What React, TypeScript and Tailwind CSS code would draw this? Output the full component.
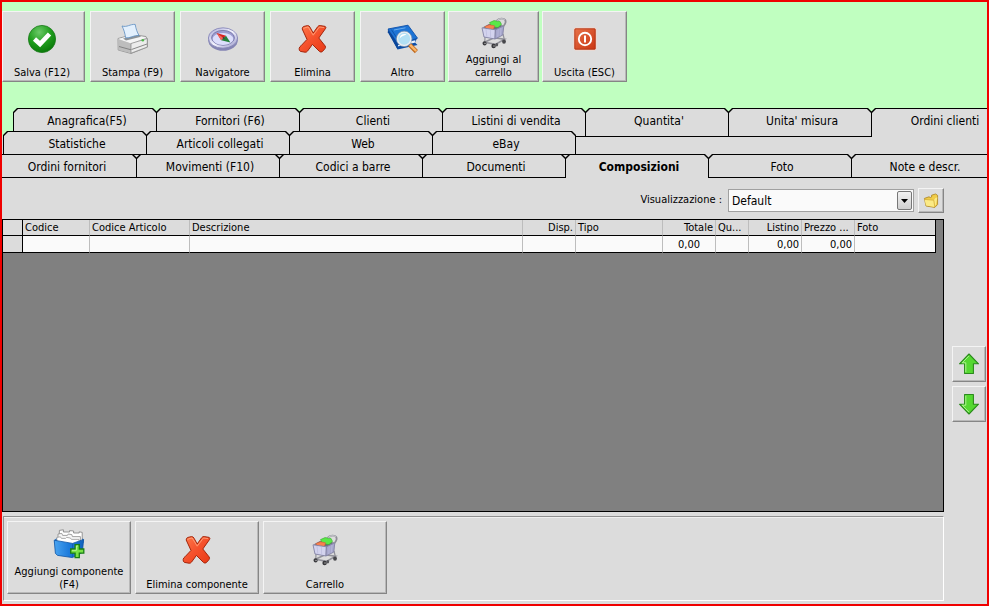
import { useState } from "react";
import type { ReactNode } from "react";
import clsx from "clsx";

type Action = { label: string; icon: ReactNode; className?: string };

const CheckIcon = () => (
  <svg width="32" height="32" viewBox="0 0 32 32" aria-hidden="true">
    <defs>
      <radialGradient id="check" cx="40%" cy="25%" r="80%">
        <stop offset="0" stopColor="#6cc968" />
        <stop offset="0.5" stopColor="#22a01f" />
        <stop offset="1" stopColor="#077507" />
      </radialGradient>
    </defs>
    <circle cx="16" cy="16" r="13.6" fill="url(#check)" stroke="#1b7a1b" strokeWidth="0.8" />
    <path d="M8.5 16 L14 21 L23.5 11" fill="none" stroke="#fff" strokeWidth="4.6" />
  </svg>
);

const PrinterIcon = () => (
  <svg width="32" height="32" viewBox="0 0 32 32" aria-hidden="true">
    <path d="M1 15.5 L16 11.5 L29 13.5 L30.5 16.5 V24 L14 30.5 L1.2 27 Z" fill="#d3d3d3" stroke="#8b8b8b" strokeWidth="0.8" />
    <path d="M1 16 L16 12 L29.5 14.5 L14 20.5 Z" fill="#f5f5f5" />
    <path d="M1 16 L14 20.5 V30 L1.5 27 Z" fill="#bdbdbd" />
    <path d="M14 20.5 L30.3 15.5 V24 L14 30.2 Z" fill="#ececec" stroke="#858585" strokeWidth="0.7" />
    <path d="M14.5 26.5 L30 21 M2 23.5 L14 26.8" stroke="#7c7c7c" strokeWidth="0.9" />
    <path d="M6 15.5 L22 12 L24 13.7 L9 17.6 Z" fill="#8d9499" />
    <path d="M5 3 C10 4.6 13 1 18.2 1.4 C19 6 20 9 22 12.4 C17 12 13 15.5 8.6 14.8 C8 10 6.6 6 5 3 Z" fill="#e3f0fd" stroke="#5a8bc0" strokeWidth="0.8" />
    <circle cx="25.8" cy="17.2" r="1.3" fill="#4db848" />
  </svg>
);

const CompassIcon = () => (
  <svg width="32" height="32" viewBox="0 0 32 32" aria-hidden="true">
    <defs>
      <linearGradient id="rim" x1="0" y1="0" x2="1" y2="1">
        <stop offset="0" stopColor="#a4a4d4" />
        <stop offset="0.5" stopColor="#f4f4ff" />
        <stop offset="1" stopColor="#9494c6" />
      </linearGradient>
    </defs>
    <ellipse cx="16" cy="17.2" rx="14.8" ry="10.6" fill="#8585b4" />
    <ellipse cx="16" cy="15" rx="14.6" ry="10.2" fill="url(#rim)" stroke="#8080b2" strokeWidth="0.8" />
    <ellipse cx="16" cy="14.8" rx="11.4" ry="7.4" fill="#9c9cd0" stroke="#6c6ca0" strokeWidth="0.8" />
    <ellipse cx="16" cy="16" rx="10.4" ry="6" fill="#dcdefc" />
    <path d="M9.6 10 L19 12.8 L14.2 17.2 Z" fill="#d8201c" />
    <path d="M19 12.8 L23.4 19.4 L14.2 17.2 Z" fill="#24823a" />
    <path d="M9.6 10 L16.6 15 L14.2 17.2 Z" fill="#f0685a" />
    <circle cx="16.6" cy="15" r="1" fill="#443c44" />
  </svg>
);

const DeleteIcon = () => (
  <svg width="32" height="32" viewBox="0 0 32 32" aria-hidden="true">
    <defs>
      <linearGradient id="cross" x1="0" y1="0" x2="1" y2="1">
        <stop offset="0" stopColor="#ff7a4c" />
        <stop offset="0.5" stopColor="#f5512c" />
        <stop offset="1" stopColor="#e83a16" />
      </linearGradient>
    </defs>
    <path
      d="M5.2 6 Q5 4 7 3.4 L10.5 2.6 Q12.3 2.6 13 4.2 L16.2 10 L20.6 3.8 Q21.6 2.4 23.2 2.6 L28.2 3.4 Q29.4 4 28.6 5.4 L21.8 15 L28.2 23 Q29 24.4 28 25.6 L25.4 28.6 Q24 29.6 22.6 28.6 L15.4 21.4 L10.6 28 Q9.6 29.4 8 29.2 L3.4 28.4 Q1.8 27.4 2.2 25.4 Q2.4 23.8 4 22.8 L10 16.4 Z"
      fill="url(#cross)"
      stroke="#a3260c"
      strokeWidth="1"
      strokeLinejoin="round"
    />
    <path d="M6.5 6 L7.6 4.8 L11.2 4 L16.2 12.2 L22.4 4 L27 4.6" fill="none" stroke="#ffa880" strokeWidth="0.8" />
  </svg>
);

const BookSearchIcon = () => (
  <svg width="32" height="32" viewBox="0 0 32 32" aria-hidden="true">
    <path d="M1 8 L10.5 26.5 L30.5 22 L28 19.5 L30 15.5 L12 17 Z" fill="#0d4fa8" />
    <path d="M10.4 23.6 L27.8 19.8 L28.4 17.2 L11.8 20.6 Z" fill="#e8f1fc" />
    <path d="M1 6 L21 2.2 L30.5 15.2 L11 21.6 Z" fill="#1d74d6" stroke="#0d4fa8" strokeWidth="0.9" />
    <path d="M1 6.2 L11 21.6 L10.4 26 L0.8 9.2 Z" fill="#0a469a" />
    <path d="M4.4 6.6 L13 19.8" stroke="#0e55ae" strokeWidth="1" />
    <path d="M7 7 L18.5 4.8" stroke="#6badee" strokeWidth="1" />
    <path d="M22.6 21.8 L29.4 28.6" stroke="#c0691e" strokeWidth="4.4" strokeLinecap="butt" />
    <path d="M23 21.8 L29.2 28" stroke="#fbb667" strokeWidth="2.4" />
    <circle cx="17.2" cy="15.8" r="6.8" fill="#b2e0f4" stroke="#e9edf1" strokeWidth="1.7" />
    <circle cx="17.2" cy="15.8" r="7.8" fill="none" stroke="#8799aa" strokeWidth="0.6" />
    <path d="M12.6 15.4 C13 11.8 16 10.4 19.4 11.4 C17 12.4 14.6 13.2 12.6 15.4 Z" fill="#fff" />
  </svg>
);

const CartIcon = () => (
  <svg width="32" height="32" viewBox="0 0 32 32" aria-hidden="true">
    <path d="M6.5 25.2 L17.5 27.4 L26.5 22.2 L16 20.8 Z" fill="none" stroke="#92929a" strokeWidth="1.6" />
    <path d="M7 19.5 L6.8 25 M25 17 L26.2 22" fill="none" stroke="#92929a" strokeWidth="1.2" />
    <path d="M4.5 10.5 L11 7 L25.5 8.6 L18 13 Z" fill="#6f6f7e" />
    <path d="M11.5 5.6 L16 3.6 L22 4.4 L23.5 7.4 L20 10.6 L13.5 9.6 Z" fill="#5ae848" stroke="#37a82f" strokeWidth="0.6" />
    <path d="M6.8 9.6 L11.5 7.8 L16.6 8.8 L15.4 12.6 L8 11.8 Z" fill="#f8804e" stroke="#c85a38" strokeWidth="0.5" />
    <path d="M4 10.8 L17.4 12.8 L17 22 L6 20 Z" fill="#d3d3ee" stroke="#8282a4" strokeWidth="0.9" />
    <path d="M17.4 12.8 L25.8 8.8 L24.8 18 L17 22 Z" fill="#a6a6cc" stroke="#8282a4" strokeWidth="0.9" />
    <path d="M8 12 L8.8 19.8 M12.4 12.8 L12.6 20.6 M20.2 12.4 L19.8 20 M23 11 L22.4 18.6" stroke="#bcbcdc" strokeWidth="0.7" />
    <path d="M18.6 3.8 C21 1 25.8 1 27.2 3 C28.4 5.2 27 7.4 25.6 9" fill="none" stroke="#8e8e96" strokeWidth="1.8" />
    <path d="M19.2 3.5 C21.4 1.3 25.2 1.2 26.9 3" fill="none" stroke="#ececf0" strokeWidth="0.7" />
    <ellipse cx="6.6" cy="26.4" rx="2" ry="2.1" fill="#3c3c40" />
    <ellipse cx="15.6" cy="29" rx="2.2" ry="2.3" fill="#37373b" />
    <ellipse cx="18.8" cy="27.8" rx="1.4" ry="1.8" fill="#55555a" />
    <ellipse cx="26" cy="24.6" rx="1.9" ry="2.2" fill="#47474b" />
    <circle cx="7" cy="26.4" r="0.7" fill="#bbb" />
    <circle cx="16" cy="29" r="0.7" fill="#bbb" />
  </svg>
);

const PowerIcon = () => (
  <svg width="32" height="32" viewBox="0 0 32 32" aria-hidden="true">
    <defs>
      <linearGradient id="power" x1="0" y1="0" x2="1" y2="1">
        <stop offset="0" stopColor="#e8744a" />
        <stop offset="1" stopColor="#c93411" />
      </linearGradient>
    </defs>
    <rect x="5" y="5" width="22" height="22" rx="1.5" fill="url(#power)" stroke="#f6d6ca" />
    <rect x="5.8" y="5.8" width="20.4" height="20.4" rx="1" fill="none" stroke="#a72c10" strokeWidth="0.7" />
    <circle cx="16" cy="16" r="6.2" fill="none" stroke="#fff" strokeWidth="1.9" />
    <path d="M16 12.6 V19.4" stroke="#fff" strokeWidth="2" />
  </svg>
);

const AddFilesIcon = () => (
  <svg width="32" height="32" viewBox="0 0 32 32" aria-hidden="true">
    <defs>
      <linearGradient id="box" x1="0" y1="0" x2="1" y2="0">
        <stop offset="0" stopColor="#4aa4f0" />
        <stop offset="0.5" stopColor="#1d7bdb" />
        <stop offset="1" stopColor="#1263bd" />
      </linearGradient>
    </defs>
    <path d="M1.5 12 L5 9 H28 L30.5 11.5 V15 H1.5 Z" fill="#1565bb" />
    <path d="M6.4 2.4 L10.4 1.8 V4 H16.6 V2.6 L20.6 3 V5 H26.2 V3.8 L29.2 4.4 V14 H6 Z" fill="#fff" stroke="#7e7e7e" strokeWidth="0.8" />
    <path d="M5 6 L8.8 5.4 L9.6 7.4 H14.4 L15.2 6 L18.8 6.6 L19.4 8.6 H27.4 V15 H5 Z" fill="#f6f6f6" stroke="#8c8c8c" strokeWidth="0.8" />
    <path d="M3.8 9.4 L7.4 8.8 L8.4 10.4 H12.6 L13.6 9.4 L17.4 10 L18.4 11.4 H26 V16 H4 Z" fill="#fff" stroke="#9c9c9c" strokeWidth="0.8" />
    <path d="M1.2 12.2 L19.6 15.4 L30.6 11.4 L29.4 24.4 L19.4 29.6 L4.6 27.4 L2.4 25.4 Z" fill="url(#box)" stroke="#0e54a5" strokeWidth="0.8" strokeLinejoin="round" />
    <path d="M19.6 15.6 L19.4 29.2" stroke="#0f58aa" strokeWidth="0.7" />
    <path d="M22.1 16.7 H26.3 V21 H30.8 V25.2 H26.3 V29.7 H22.1 V25.2 H17.7 V21 H22.1 Z" fill="#77e244" stroke="#197e14" strokeWidth="1.3" />
    <path d="M23.4 18 H25 M19 22.3 H23.4 V18" fill="none" stroke="#c8f8a8" strokeWidth="0.8" />
  </svg>
);

const ArrowIcon = ({ down }: { down?: boolean }) => (
  <svg width="22" height="22" viewBox="0 0 22 22" className={clsx(down && "-scale-y-100")} aria-hidden="true">
    <path d="M11 1 L20.5 10.8 H15.4 V20.5 H6.6 V10.8 H1.5 Z" fill="#55d831" stroke="#2a8a1c" strokeWidth="1.1" strokeLinejoin="round" />
    <path d="M11 2.8 L4.2 9.8 H7.8 V19.3" fill="none" stroke="#aff490" strokeWidth="1" />
  </svg>
);

const FolderIcon = () => (
  <svg width="16" height="16" viewBox="0 0 16 16" aria-hidden="true">
    <path d="M1.4 5.4 L6 3.8 L7.4 4.6 L8.6 4 V2.2 L12.6 1 L14.6 2.4 V11.5 L11.8 14.4 L3 13 Z" fill="#f0cc48" stroke="#a88220" strokeWidth="0.8" />
    <path d="M1.6 6.6 L11 7 L12.4 5 L14.4 4.2 L13 11.6 L11.4 14 L3 12.6 Z" fill="#fbea86" />
    <path d="M1.6 6.4 L10.8 7.2 L11.8 14" fill="none" stroke="#d5ad34" strokeWidth="0.8" />
  </svg>
);

const TOOLBAR: Action[] = [
  { label: "Salva (F12)", icon: <CheckIcon />, className: "w-[83px] mr-[5px] pr-[3px]" },
  { label: "Stampa (F9)", icon: <PrinterIcon />, className: "w-[85px] mr-[5px]" },
  { label: "Navigatore", icon: <CompassIcon />, className: "w-[85px] mr-[5px]" },
  { label: "Elimina", icon: <DeleteIcon />, className: "w-[85px] mr-[5px]" },
  { label: "Altro", icon: <BookSearchIcon />, className: "w-[85px] mr-[3px]" },
  { label: "Aggiungi al carrello", icon: <CartIcon />, className: "w-[91px] mr-[3px] px-3" },
  { label: "Uscita (ESC)", icon: <PowerIcon />, className: "w-[85px]" },
];

const COMPONENT_ACTIONS: Action[] = [
  { label: "Aggiungi componente (F4)", icon: <AddFilesIcon /> },
  { label: "Elimina componente", icon: <DeleteIcon /> },
  { label: "Carrello", icon: <CartIcon /> },
];

const TABS_BACK = ["Anagrafica(F5)", "Fornitori (F6)", "Clienti", "Listini di vendita", "Quantita'", "Unita' misura", "Ordini clienti"];
const TABS_MIDDLE = ["Statistiche", "Articoli collegati", "Web", "eBay"];
const TABS_FRONT = ["Ordini fornitori", "Movimenti (F10)", "Codici a barre", "Documenti", "Composizioni", "Foto", "Note e descr."];

const COLUMNS = [
  { label: "Codice", width: "w-[67px]", value: "" },
  { label: "Codice Articolo", width: "w-[100px]", value: "" },
  { label: "Descrizione", width: "", value: "" },
  { label: "Disp.", width: "w-[53px]", value: "", align: "text-right" },
  { label: "Tipo", width: "w-[87px]", value: "" },
  { label: "Totale", width: "w-[53px]", value: "0,00", align: "text-right", cellAlign: "text-center" },
  { label: "Qu...", width: "w-[33px]", value: "" },
  { label: "Listino", width: "w-[53px]", value: "0,00", align: "text-right", cellAlign: "text-right" },
  { label: "Prezzo ...", width: "w-[53px]", value: "0,00", cellAlign: "text-right" },
  { label: "Foto", width: "w-[81px]", value: "" },
];

const RAISED = "border border-t-[#f4f4f4] border-l-[#f4f4f4] border-r-[#858585] border-b-[#858585] bg-[#dcdcdc] shadow-[inset_-1px_-1px_0_#b8b8b8]";

const ActionButton = ({ label, icon, className }: Action) => (
  <button type="button" className={clsx("flex shrink-0 flex-col items-center pb-[2px] text-[11px] leading-[13px]", RAISED, className)}>
    <span className="flex flex-1 items-center">{icon}</span>
    <span>{label}</span>
  </button>
);

type TabProps = { label: string; active: boolean; open?: boolean; onSelect: () => void };

// Chamfered tab: a black shape with a grey one inset by a pixel
const Tab = ({ label, active, open, onSelect }: TabProps) => (
  <button
    type="button"
    role="tab"
    aria-selected={active}
    onClick={onSelect}
    className={clsx(
      "-mr-px w-36 shrink-0 bg-black px-px pt-px [clip-path:polygon(0_4px,4px_0,calc(100%-4px)_0,100%_4px,100%_100%,0_100%)]",
      !active && !open && "pb-px"
    )}
  >
    <span
      className={clsx(
        "block h-full bg-[#dcdcdc] pt-px pl-1 text-[12px] leading-[22px] [clip-path:polygon(0_4px,4px_0,calc(100%-4px)_0,100%_4px,100%_100%,0_100%)]",
        active && "font-bold"
      )}
    >
      {label}
    </span>
  </button>
);

const App = () => {
  const [tab, setTab] = useState("Composizioni");

  const renderTabs = (labels: string[]) =>
    labels.map((label) => (
      <Tab key={label} label={label} active={tab === label} open={label === "Ordini clienti"} onSelect={() => setTab(label)} />
    ));

  return (
    <div className="flex min-h-screen flex-col overflow-hidden border-2 border-[#f00000] bg-[#dcdcdc] font-['DejaVu_Sans_Condensed','DejaVu_Sans',sans-serif] text-black">
      <header className="flex h-[106px] bg-[#c0ffc0] pt-[9px]">
        <div className="flex h-[71px]">
          {TOOLBAR.map((action) => (
            <ActionButton key={action.label} {...action} />
          ))}
        </div>
      </header>

      <div role="tablist" className="overflow-hidden">
        <div className="flex h-[29px] bg-[#c0ffc0] pl-[11px]">{renderTabs(TABS_BACK)}</div>
        <div className="relative -mt-[6px] flex h-6 pl-px">{renderTabs(TABS_MIDDLE)}</div>
        <div className="relative -mt-px -ml-[9px] flex h-6">{renderTabs(TABS_FRONT)}</div>
      </div>

      <main className="flex flex-1">
        <div className="flex min-w-0 flex-1 flex-col">
          <div className="flex h-[41px] items-center justify-end pt-1">
            <label htmlFor="view" className="mr-[6px] text-[11px]">
              Visualizzazione :
            </label>
            <div className="relative mr-1 w-[186px]">
              <select id="view" className="block h-[23px] w-full appearance-none border border-[#a0a0a0] bg-[#fafafa] pl-[3px] text-[12px]">
                <option>Default</option>
              </select>
              <span className="pointer-events-none absolute top-[2px] right-[2px] flex h-[19px] w-[15px] items-center justify-center rounded-xs border border-[#777] bg-linear-to-b from-[#f2f2f2] to-[#cfcfcf]">
                <svg width="7" height="4" viewBox="0 0 7 4" aria-hidden="true">
                  <path d="M0 0 H7 L3.5 4 Z" fill="#000" />
                </svg>
              </span>
            </div>
            <button type="button" aria-label="Apri visualizzazione" className={clsx("flex h-[25px] w-[26px] items-center justify-center", RAISED)}>
              <FolderIcon />
            </button>
          </div>

          <div className="flex-1 border border-black bg-[#808080] pr-[7px]">
            <table className="w-full table-fixed border-separate border-spacing-0 text-[11px] leading-[15px]">
              <thead>
                <tr className="bg-[#dcdcdc]">
                  <th className="h-4 w-5 border-r border-b border-black p-0" />
                  {COLUMNS.map((col, i) => (
                    <th
                      key={col.label}
                      className={clsx(
                        "h-4 overflow-hidden border-r border-b border-b-black px-[2px] py-0 font-normal whitespace-nowrap",
                        i === COLUMNS.length - 1 ? "border-r-black" : "border-r-[#bdbdbd]",
                        col.width,
                        col.align ?? "text-left"
                      )}
                    >
                      {col.label}
                    </th>
                  ))}
                </tr>
              </thead>
              <tbody>
                <tr className="bg-[#fafafa]">
                  <td className="h-[17px] border-r border-b border-black bg-[#dcdcdc] p-0" />
                  {COLUMNS.map((col, i) => (
                    <td
                      key={col.label}
                      className={clsx(
                        "h-[17px] border-r border-b border-b-black px-[2px] py-0",
                        i === COLUMNS.length - 1 ? "border-r-black" : "border-r-[#bdbdbd]",
                        col.cellAlign
                      )}
                    >
                      {col.value}
                    </td>
                  ))}
                </tr>
              </tbody>
            </table>
          </div>

          <div className="mt-1 mb-[3px] ml-px flex h-[85px] gap-1 border border-t-[#909090] border-r-white border-b-white border-l-[#909090] pt-1 pl-[3px] shadow-[inset_0_1px_0_#f0f0f0]">
            {COMPONENT_ACTIONS.map((action) => (
              <ActionButton key={action.label} {...action} className="h-[73px] w-[124px] px-1" />
            ))}
          </div>
        </div>

        <aside className="flex w-[43px] flex-col items-center gap-1 pt-[168px] pl-[6px]">
          <button type="button" aria-label="Sposta su" className={clsx("flex h-9 w-[34px] items-center justify-center", RAISED)}>
            <ArrowIcon />
          </button>
          <button type="button" aria-label="Sposta giù" className={clsx("flex h-9 w-[34px] items-center justify-center", RAISED)}>
            <ArrowIcon down />
          </button>
        </aside>
      </main>
    </div>
  );
};

export default App;
